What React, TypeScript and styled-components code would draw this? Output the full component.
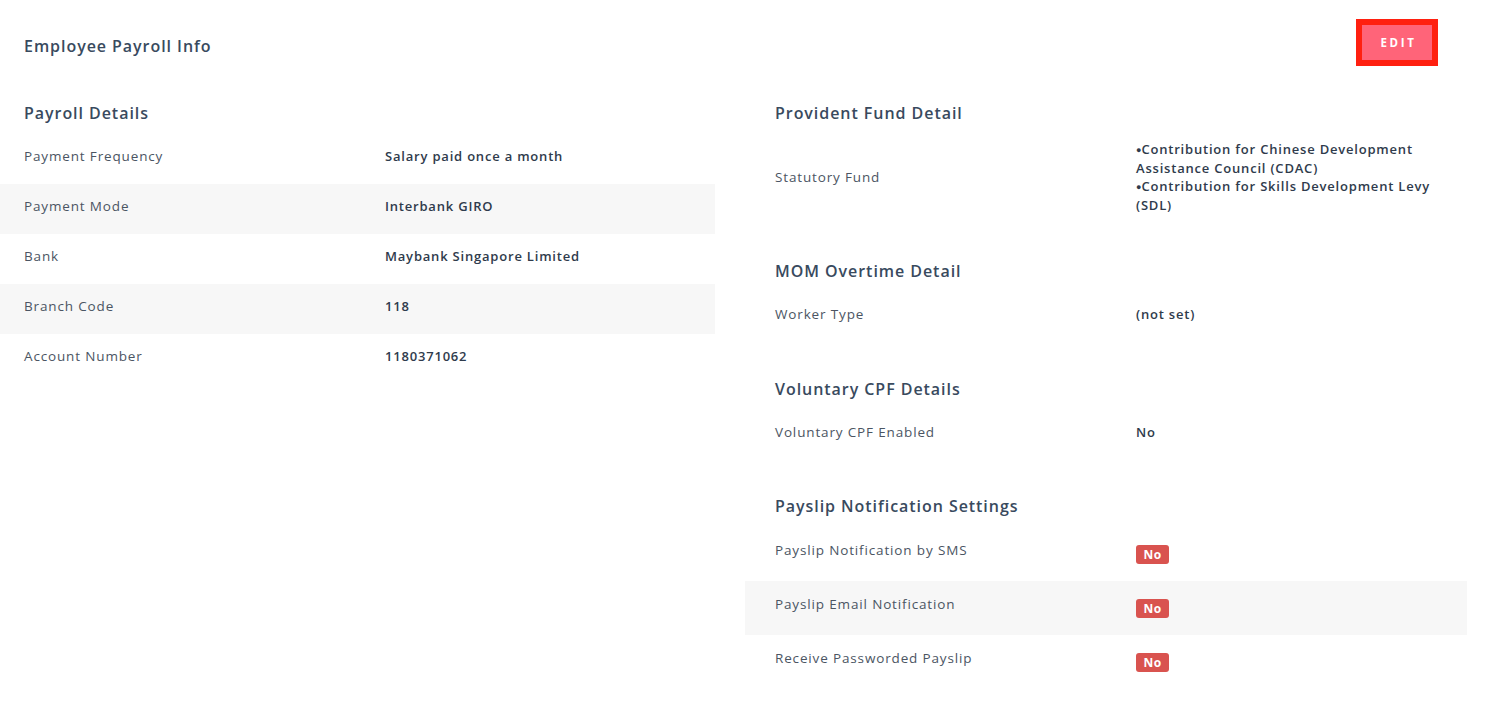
import React from "react";
import styled, { createGlobalStyle } from "styled-components";

const GlobalStyle = createGlobalStyle`
  html, body { margin: 0; padding: 0; background: #ffffff; }
  body { font-family: "Open Sans", "Liberation Sans", sans-serif; color: #3a4757; }
  * { box-sizing: border-box; }
`;

const Page = styled.div`
  width: 1486px;
  min-height: 713px;
  background: #fff;
`;

const Header = styled.div`
  height: 90px;
  display: flex;
  justify-content: space-between;
  align-items: flex-start;
  padding: 25px 54px 0 24px;
`;

const Title = styled.h1`
  margin: 10px 0 0;
  font-size: 16px;
  line-height: 22px;
  font-weight: 600;
  letter-spacing: 0.95px;
  color: #394a5e;
`;

const EditButton = styled.button`
  width: 70px;
  height: 35px;
  border: none;
  background: #ff6479;
  color: #fff;
  font-family: "Open Sans", "Liberation Sans", sans-serif;
  font-size: 11.5px;
  font-weight: 700;
  letter-spacing: 2.7px;
  padding: 0 0 0 3px;
  outline: 6px solid #ff2010;
  cursor: pointer;
`;

const Columns = styled.div`
  display: grid;
  grid-template-columns: 715px 722px;
  column-gap: 30px;
`;

const Column = styled.div`
  display: flex;
  flex-direction: column;
  gap: 36px;
  padding-top: 12px;
`;

const Section = styled.section<{ $shift?: number }>`
  margin-top: ${(p) => p.$shift ?? 0}px;
`;

const SectionTitle = styled.h2<{ $pad: number }>`
  margin: 0 0 10px;
  padding-left: ${(p) => p.$pad}px;
  font-size: 16px;
  line-height: 22px;
  font-weight: 600;
  letter-spacing: 0.95px;
  color: #394a5e;
`;

const Rows = styled.div``;

const Row = styled.div<{ $pad: number; $tall?: boolean }>`
  display: grid;
  grid-template-columns: 361px 1fr;
  align-items: start;
  padding: ${(p) => (p.$tall ? 13 : 12)}px ${(p) => p.$pad}px
    ${(p) => (p.$tall ? 17 : 18)}px;
  &:nth-child(even) {
    background: #f7f7f7;
  }
`;

const FundRow = styled(Row)`
  align-items: center;
  padding-top: 6px;
  padding-bottom: 10px;
`;

const Label = styled.div`
  font-size: 13.5px;
  line-height: 20px;
  letter-spacing: 0.85px;
  color: #4b5563;
`;

const Value = styled.div`
  font-size: 13px;
  line-height: 20px;
  font-weight: 600;
  letter-spacing: 0.8px;
  color: #2f3b4c;
`;

const FundList = styled.ul`
  margin: 0;
  padding: 0 4px 0 0;
  list-style: none;
  font-size: 13px;
  line-height: 18.5px;
  font-weight: 600;
  letter-spacing: 0.8px;
  color: #2f3b4c;
`;

const FundItem = styled.li`
  line-height: 18.5px;
  &::before {
    content: "●";
    font-size: 9px;
    line-height: 0;
    vertical-align: 1px;
    letter-spacing: 0;
  }
`;

const Badge = styled.span`
  display: inline-flex;
  align-items: center;
  justify-content: center;
  width: 33px;
  height: 19px;
  margin-top: 5px;
  border-radius: 3px;
  background: #d9534f;
  color: #fff;
  font-size: 12px;
  font-weight: 700;
  letter-spacing: 0.3px;
`;

const payroll: [string, string][] = [
  ["Payment Frequency", "Salary paid once a month"],
  ["Payment Mode", "Interbank GIRO"],
  ["Bank", "Maybank Singapore Limited"],
  ["Branch Code", "118"],
  ["Account Number", "1180371062"],
];

const payslip = [
  "Payslip Notification by SMS",
  "Payslip Email Notification",
  "Receive Passworded Payslip",
];

export default function App() {
  return (
    <Page>
      <GlobalStyle />
      <Header>
        <Title>Employee Payroll Info</Title>
        <EditButton>EDIT</EditButton>
      </Header>
      <Columns>
        <Column>
          <Section>
            <SectionTitle $pad={24}>Payroll Details</SectionTitle>
            <Rows>
              {payroll.map(([l, v]) => (
                <Row key={l} $pad={24}>
                  <Label>{l}</Label>
                  <Value>{v}</Value>
                </Row>
              ))}
            </Rows>
          </Section>
        </Column>
        <Column>
          <Section>
            <SectionTitle $pad={30}>Provident Fund Detail</SectionTitle>
            <Rows>
              <FundRow $pad={30}>
                <Label>Statutory Fund</Label>
                <FundList>
                  <FundItem>Contribution for Chinese Development Assistance Council (CDAC)</FundItem>
                  <FundItem>Contribution for Skills Development Levy (SDL)</FundItem>
                </FundList>
              </FundRow>
            </Rows>
          </Section>
          <Section>
            <SectionTitle $pad={30}>MOM Overtime Detail</SectionTitle>
            <Rows>
              <Row $pad={30}>
                <Label>Worker Type</Label>
                <Value>(not set)</Value>
              </Row>
            </Rows>
          </Section>
          <Section>
            <SectionTitle $pad={30}>Voluntary CPF Details</SectionTitle>
            <Rows>
              <Row $pad={30}>
                <Label>Voluntary CPF Enabled</Label>
                <Value>No</Value>
              </Row>
            </Rows>
          </Section>
          <Section $shift={-1}>
            <SectionTitle $pad={30}>Payslip Notification Settings</SectionTitle>
            <Rows>
              {payslip.map((l) => (
                <Row key={l} $pad={30} $tall>
                  <Label>{l}</Label>
                  <div>
                    <Badge>No</Badge>
                  </div>
                </Row>
              ))}
            </Rows>
          </Section>
        </Column>
      </Columns>
    </Page>
  );
}
